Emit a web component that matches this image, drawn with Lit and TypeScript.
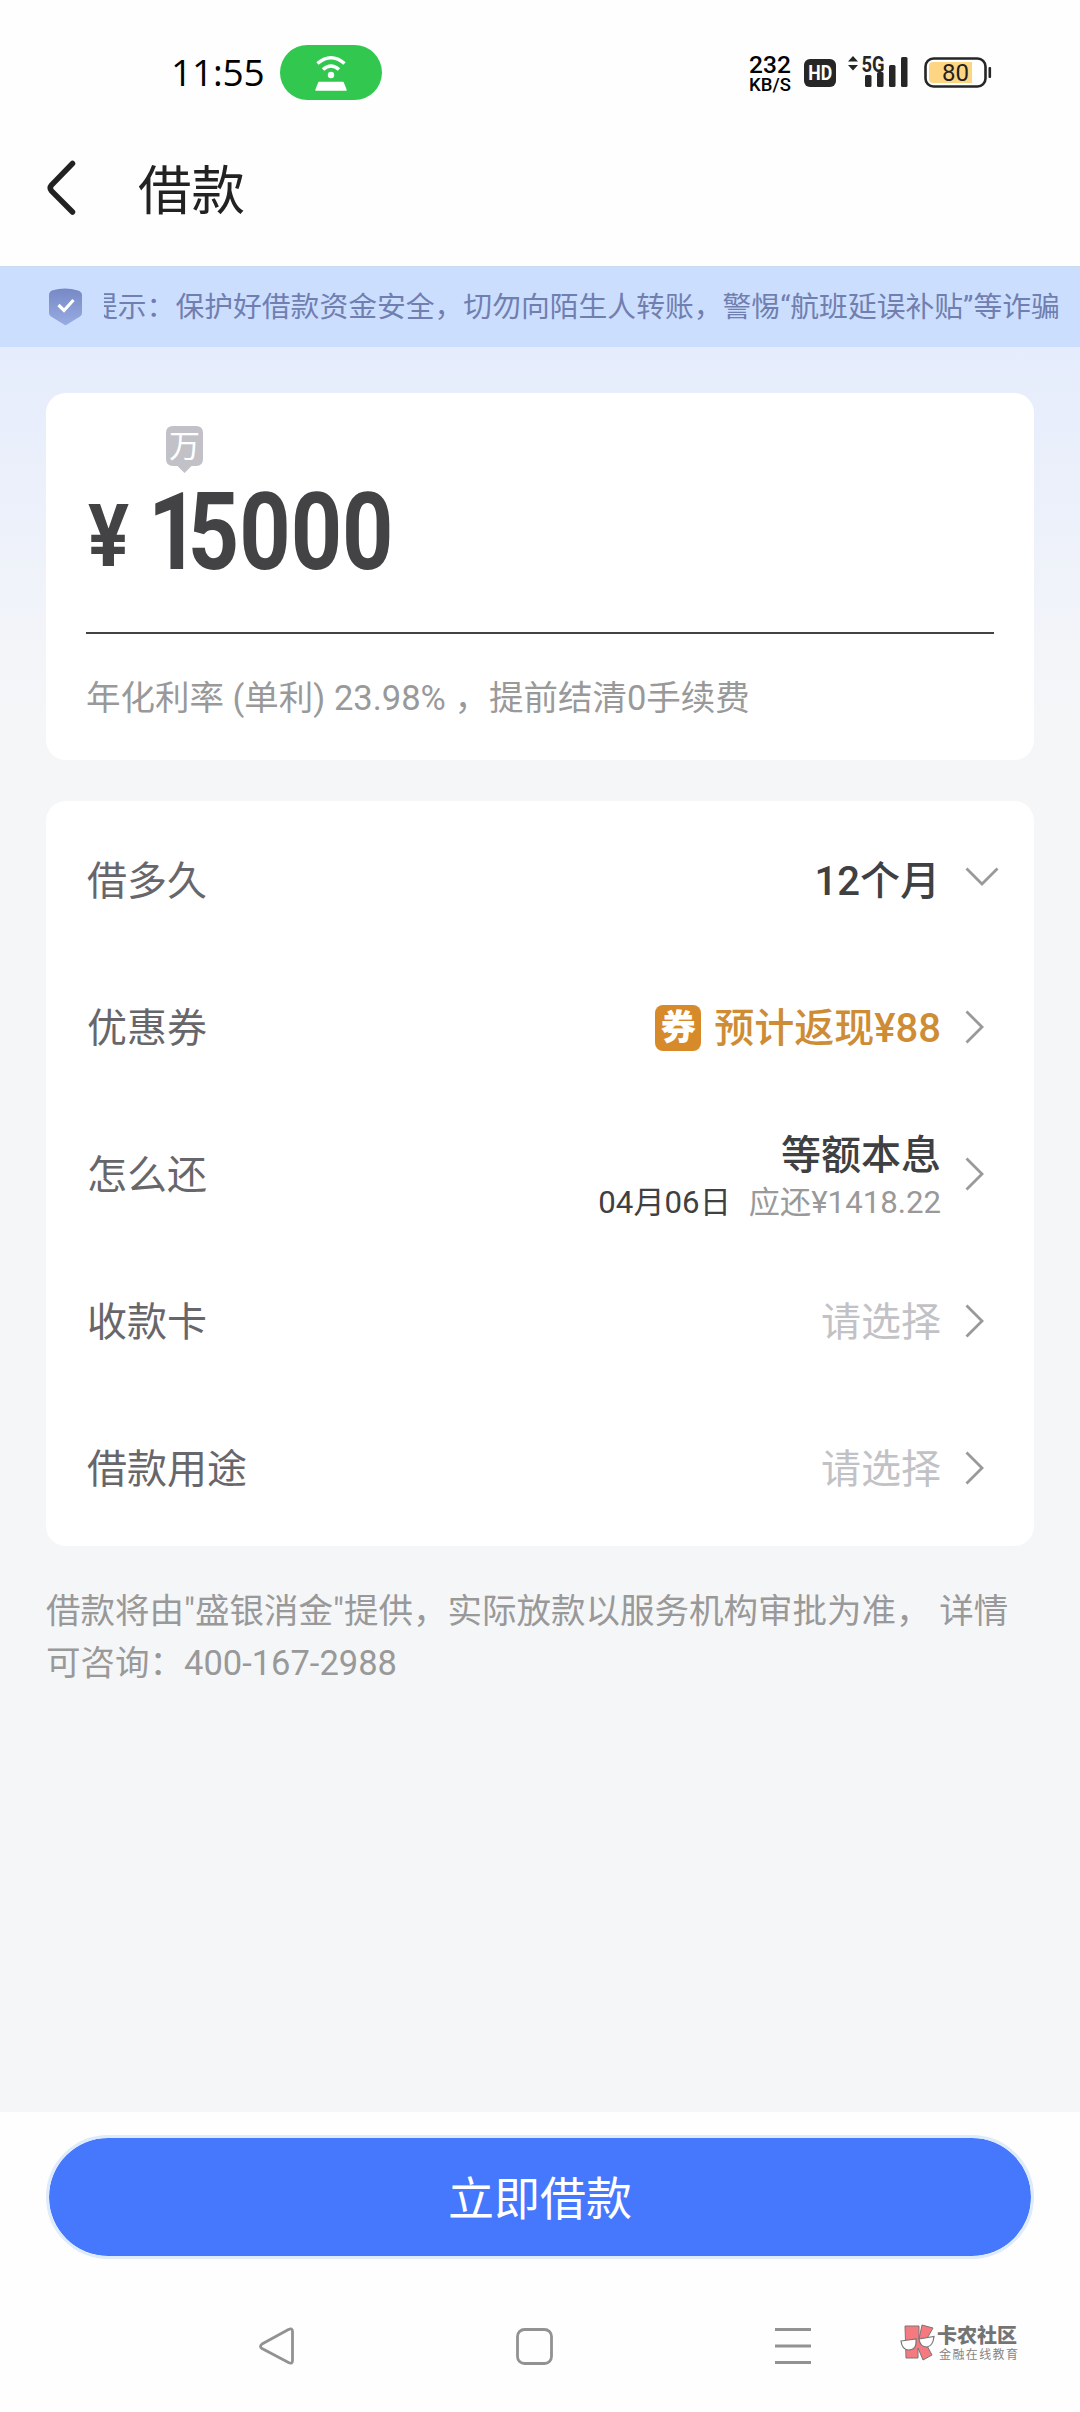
import { LitElement, html, css, svg } from "lit";
import { customElement } from "lit/decorators.js";

const chevronRight = html`<svg class="chev" viewBox="0 0 20 34" width="20" height="34"><path d="M1.5 1.5 17 17 1.5 32.5" fill="none" stroke="#999" stroke-width="2.8"/></svg>`;
const chevronDown = html`<svg class="chev-down" viewBox="0 0 34 20" width="34" height="20"><path d="M1.5 1.5 17 17 32.5 1.5" fill="none" stroke="#999" stroke-width="2.8"/></svg>`;
const bars = [[0, 20, 12], [12, 17, 15], [24, 10, 22], [36, 2, 30]];

@customElement("app-root")
export class AppRoot extends LitElement {
  static styles = css`
    :host { display: block; width: 1080px; height: 2412px; overflow: hidden; background: #fefefe;
      font-family: Roboto, "Noto Sans CJK SC", sans-serif; color: #3f4042; }
    * { box-sizing: border-box; }
    svg { display: block; flex: none; overflow: visible; }
    .page { display: flex; flex-direction: column; height: 2412px; }
    .status { height: 146px; display: flex; align-items: flex-start; padding: 45px 88px 0 171px; color: #000; }
    .time { font: 500 37px/54px "Open Sans", sans-serif; width: 109px; letter-spacing: -0.2px; white-space: nowrap; }
    .pill { width: 102px; height: 55px; border-radius: 28px; background: #32c850; display: flex; justify-content: center; align-items: center; }
    .grow { flex: 1; }
    .net { width: 44px; margin-right: 12px; padding-top: 8px; text-align: center; font-weight: 500; }
    .net1 { font-size: 24.5px; line-height: 23px; white-space: nowrap; }
    .net2 { font-size: 18.5px; line-height: 19px; white-space: nowrap; }
    .hd { width: 32px; height: 28px; margin: 14px 12px 0 0; border-radius: 6px; background: #262626; color: #fff; font-weight: 700; font-size: 21px; line-height: 29px; display: flex; justify-content: center; }
    .squeeze { display: block; transform: scaleX(0.84); }
    .sig { margin-top: 10px; margin-right: 16px; }
    .batt { margin-top: 11px; }
    .head { height: 120px; display: flex; align-items: center; padding: 0 0 36px 46px; }
    .title { font-size: 53.5px; line-height: 60px; margin-left: 61px; color: #222; padding-top: 7px; }
    .notice { height: 81px; background: #ccdefe; border-top: 1px solid #cbdcf0; display: flex; align-items: center; padding-left: 48px; }
    .clip { margin-left: 21px; width: 970px; overflow: hidden; display: flex; }
    .run { margin-left: -15px; font-size: 28.8px; line-height: 44px; padding-bottom: 1px; white-space: nowrap; color: #717fb0; }
    .body { height: 1765px; padding: 46px 46px 0; background: linear-gradient(180deg, #e5ecfc 0, #f5f6f8 360px); display: flex; flex-direction: column; }
    .card { background: #fff; border-radius: 20px; }
    .amount { height: 367px; padding: 33px 40px 0; display: flex; flex-direction: column; }
    .unit { margin-left: 80px; }
    .sum { height: 161px; display: flex; align-items: flex-start; border-bottom: 2px solid #434345; font-weight: 700; color: #434346; }
    .yen { font-size: 88px; line-height: 104px; width: 62px; padding: 11px 0 0 2px; }
    .yen span { display: block; width: 60px; transform: scaleX(0.87); transform-origin: 0 0; }
    .num { font-size: 108px; line-height: 118px; height: 118px; transform: scaleX(0.83); transform-origin: 0 0; }
    .one { letter-spacing: -14px; }
    .rate { font-size: 34.5px; line-height: 50px; margin-top: 39px; color: #999; white-space: pre; }
    .list { margin-top: 41px; height: 745px; padding: 6px 35px 0 41px; }
    .row { height: 147px; display: flex; align-items: center; }
    .label { flex: 1; font-size: 40px; line-height: 48px; padding-top: 3px; color: #67676b; }
    .val { font-size: 40px; font-weight: 500; line-height: 48px; padding-top: 3px; white-space: nowrap; }
    .pick { font-weight: 400; color: #c2c2c6; }
    .stack { display: flex; flex-direction: column; align-items: flex-end; padding-top: 4px; }
    .due { font-size: 31.2px; line-height: 45px; display: flex; gap: 18px; }
    .muted { color: #999; }
    .gold { color: #ce8c35; }
    .ticket { width: 46px; height: 46px; border-radius: 8px; background: #d78a2a; color: #fff; font-weight: 900; font-size: 35px; line-height: 47px; text-align: center; margin-right: 13px; }
    .chev { margin: -2px 14px 0 24px; }
    .chev-down { margin: -8px 0 0 25px; }
    .tip { margin-top: 39px; font-size: 34.5px; line-height: 52px; color: #999; white-space: pre; }
    .foot { height: 176px; padding: 23px 46px 0; }
    .btn { height: 124px; border: 3px solid #deebfa; border-radius: 63px; background: #4678fe; background-clip: padding-box; color: #fff; font-size: 46px; display: flex; align-items: center; justify-content: center; padding-bottom: 4px; }
    .nav { height: 124px; display: flex; align-items: flex-start; padding: 36px 0 0 257px; }
    .n2 { margin-left: 219px; } .n3 { margin-left: 221px; }
    .brand { margin: 0 0 0 88px; display: flex; color: #747474; gap: 2px; }
    .b1 { font-size: 20px; line-height: 25px; font-weight: 900; white-space: nowrap; }
    .b2 { font-size: 12px; line-height: 12px; letter-spacing: 1.4px; margin-left: 2px; white-space: nowrap; color: #858585; }
  `;

  private row(label: string, value: unknown, icon = chevronRight) {
    return html`<div class="row"><div class="label">${label}</div>${value}${icon}</div>`;
  }

  render() {
    return html`<div class="page">
      <div class="status">
        <div class="time">11:55</div>
        <div class="pill"><svg width="34" height="38" viewBox="0 0 34 38"><g fill="none" stroke="#fff" stroke-width="3.6"><path d="M3.500 9.500Q17 -2 30.500 9.500"/><path d="M9 15.500Q17 8.500 25 15.500"/></g><circle cx="17" cy="21" r="3.200" fill="#fff"/><path d="M5 28.500H29L32 36H2Z" fill="#fff" stroke="#fff" stroke-width="1.500" stroke-linejoin="round"/></svg></div>
        <div class="grow"></div>
        <div class="net"><div class="net1">232</div><div class="net2">KB/S</div></div>
        <div class="hd"><span class="squeeze">HD</span></div>
        <svg class="sig" width="60" height="34" viewBox="0 0 60 34" fill="#262626">
          <path d="M0 6.500 5 1l5 5.500zM0 10h10l-5 5.500z"/><text x="13.500" y="16.500" font-size="22" font-weight="700" textLength="23" lengthAdjust="spacingAndGlyphs">5G</text>
          ${bars.map(([x, y, h]) => svg`<rect x=${17 + x} y=${y} width="6.500" height=${h} rx="1.500"/>`)}
        </svg>
        <svg class="batt" width="68" height="34" viewBox="0 0 68 34"><rect x="1.500" y="2.500" width="60" height="28" rx="8" fill="#fff" stroke="#262626" stroke-width="2.600"/><path d="M9 6H48V27H9a4 4 0 0 1-4-4V10a4 4 0 0 1 4-4z" fill="#fdd583"/><rect x="64.500" y="11" width="2.600" height="11" rx="1" fill="#262626"/><text x="31.500" y="25" font-size="24" text-anchor="middle" fill="#222">80</text></svg>
      </div>
      <div class="head">
        <svg width="31" height="56" viewBox="0 0 31 56"><path d="M26.500 3.500 5.500 25Q3 28 5.500 31L26.500 52" fill="none" stroke="#222" stroke-width="5.500" stroke-linecap="round"/></svg>
        <div class="title">借款</div>
      </div>
      <div class="notice">
        <svg width="35" height="38" viewBox="0 0 35 38"><defs><linearGradient id="g" x1="0" y1="0" x2="0" y2="1"><stop offset="0" stop-color="#7689c5"/><stop offset="1" stop-color="#98abe2"/></linearGradient></defs><path d="M4 2.500Q17 -1.500 30 2.500 34 4 34 7V25Q34 27 32 28.500L19 36.500Q17.500 38 16 36.500L3 28.500Q1 27 1 25V7Q1 4 4 2.500Z" fill="url(#g)"/><path d="M10.500 17 16 22.500 25.500 12" fill="none" stroke="#fff" stroke-width="3.200"/></svg>
        <div class="clip"><div class="run">提示：保护好借款资金安全，切勿向陌生人转账，警惕“航班延误补贴”等诈骗</div></div>
      </div>
      <div class="body">
        <div class="card amount">
          <svg class="unit" width="37" height="47" viewBox="0 0 37 47"><path d="M7 0H30Q37 0 37 7V33Q37 40 30 40H25.500L18.500 47 11.500 40H7Q0 40 0 33V7Q0 0 7 0Z" fill="#c1c1c7"/><text x="18.500" y="31" font-size="31" text-anchor="middle" fill="#fff">万</text></svg>
          <div class="sum"><div class="yen"><span>¥</span></div><div class="num"><span class="one">1</span>5000</div></div>
          <div class="rate">年化利率 (单利) 23.98% ，提前结清0手续费</div>
        </div>
        <div class="card list">
          ${this.row("借多久", html`<div class="val">12个月</div>`, chevronDown)}
          ${this.row("优惠券", html`<div class="ticket">券</div><div class="val gold">预计返现¥88</div>`)}
          ${this.row("怎么还", html`<div class="stack"><div class="val">等额本息</div><div class="due"><span>04月06日</span><span class="muted">应还¥1418.22</span></div></div>`)}
          ${this.row("收款卡", html`<div class="val pick">请选择</div>`)}
          ${this.row("借款用途", html`<div class="val pick">请选择</div>`)}
        </div>
        <div class="tip">借款将由"盛银消金"提供，实际放款以服务机构审批为准， 详情<br>可咨询：400-167-2988</div>
      </div>
      <div class="foot"><div class="btn">立即借款</div></div>
      <div class="nav">
        <svg width="40" height="44" viewBox="0 0 40 44"><path d="M31.500 5.500Q35.500 3.500 35.500 7.500V36.500Q35.500 40.500 31.500 38.500L5 24.500Q2 22.500 5 20Z" fill="none" stroke="#929292" stroke-width="2.800" stroke-linejoin="round"/></svg>
        <svg class="n2" width="38" height="44" viewBox="0 0 38 44"><rect x="1.500" y="5.500" width="34" height="34" rx="7" fill="none" stroke="#929292" stroke-width="2.800"/></svg>
        <svg class="n3" width="37" height="44" viewBox="0 0 37 44"><path d="M0 5.500H36M0 22H36M0 38.500H36" stroke="#929292" stroke-width="3"/></svg>
        <div class="brand">
          <svg width="35" height="38" viewBox="0 0 35 38"><g fill="#f47a80" stroke="#777" stroke-width="1"><path d="M5 2H19V15L22 1 33 4 25 18 32 31 23 36 18 24V34H6Z"/></g><g fill="#fff" stroke="#777" stroke-width="1.200"><path d="M1 17 16 15Q17 26 9 26 2 26 1 17Z"/><path d="M19 15 34 12.500Q33 22 27 23 20 23 19 15Z"/></g></svg>
          <div><div class="b1">卡农社区</div><div class="b2">金融在线教育</div></div>
        </div>
      </div>
    </div>`;
  }
}
